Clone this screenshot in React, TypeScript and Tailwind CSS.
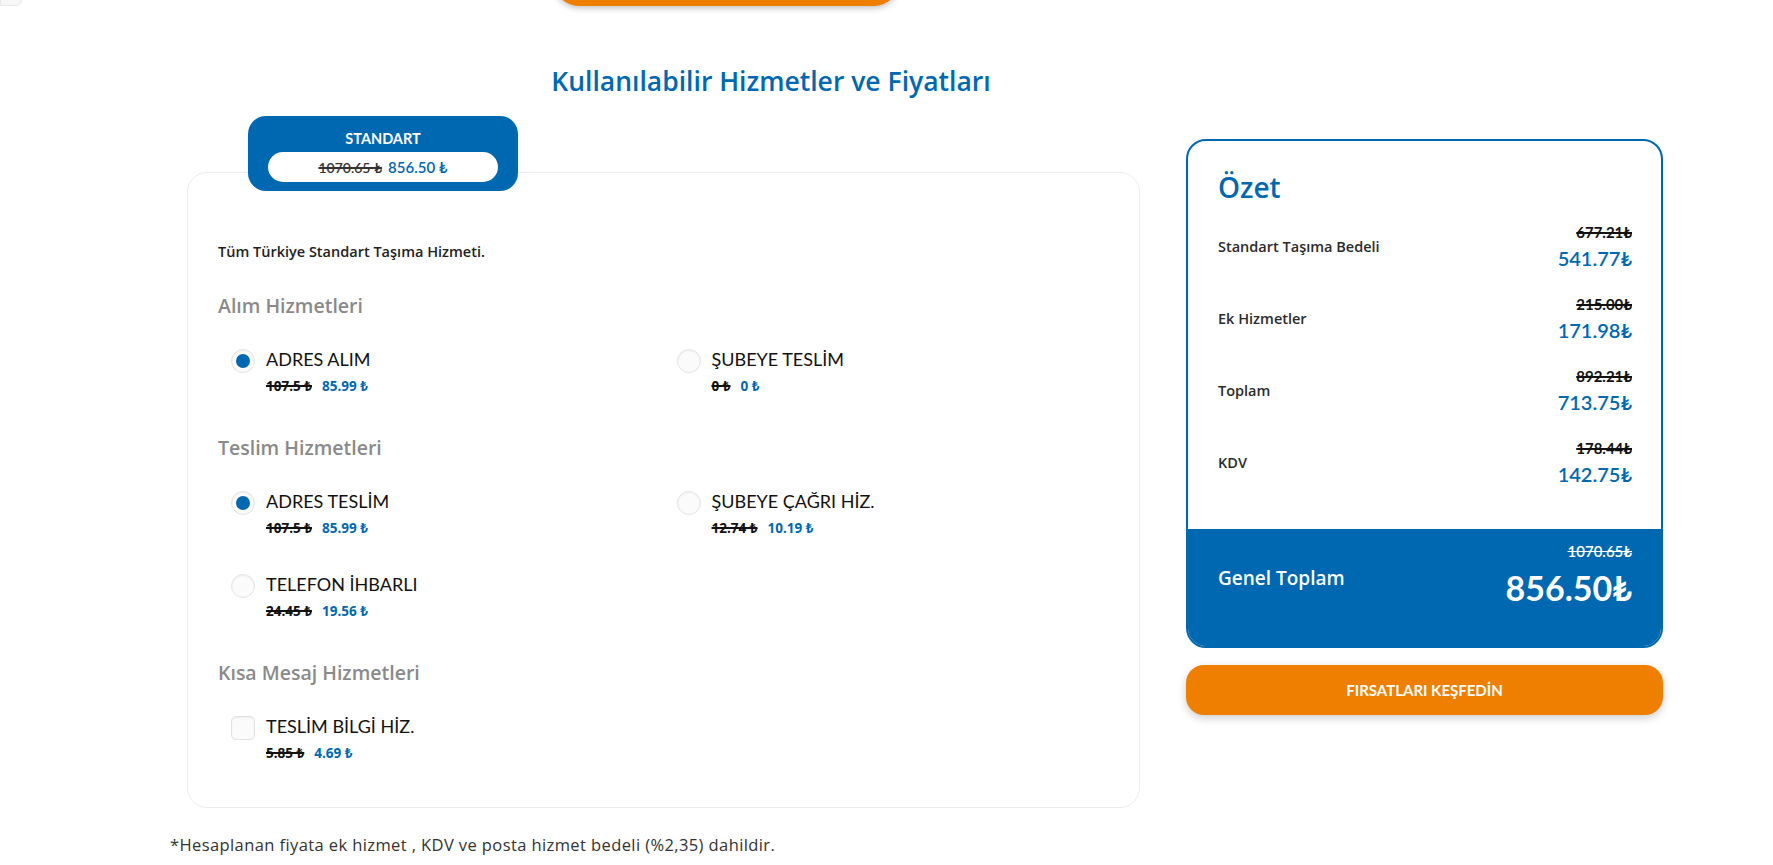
import React from "react";

const UB = "font-['Open_Sans','Noto_Sans',sans-serif]";

type Opt = { label: string; old: string; price: string; selected?: boolean; kind?: "radio" | "check" };

function Control({ selected, kind }: { selected?: boolean; kind?: "radio" | "check" }) {
  if (kind === "check") {
    return <div className="mt-[2px] h-[24px] w-[24px] shrink-0 rounded-[5px] border border-[#e2e2e2] bg-[#fbfbfb] shadow-[inset_0_1px_2px_rgba(0,0,0,0.06)]" />;
  }
  return (
    <div className="mt-[2px] flex h-[24px] w-[24px] shrink-0 items-center justify-center rounded-full border border-[#e4e4e4] bg-[#fbfbfb] shadow-[inset_0_1px_2px_rgba(0,0,0,0.06)]">
      {selected && <div className="h-[14px] w-[14px] rounded-full bg-[#0068b1]" />}
    </div>
  );
}

function Option({ o }: { o: Opt }) {
  return (
    <div className="flex items-start gap-[11px] pl-[13px]">
      <Control selected={o.selected} kind={o.kind} />
      <div className="flex flex-col">
        <div className="text-[18px] leading-[24px] text-[#111]">{o.label}</div>
        <div className={`mt-[5px] flex items-center gap-[10px] text-[13.5px] font-bold leading-[20px] ${UB}`}>
          <span className="text-[#111] line-through decoration-2">{o.old}</span>
          <span className="text-[#0068b1]">{o.price}</span>
        </div>
      </div>
    </div>
  );
}

function Heading({ children, first }: { children: React.ReactNode; first?: boolean }) {
  return (
    <div className={`${first ? "mt-[30px]" : "mt-[38px]"} text-[19.5px] font-semibold leading-[28px] text-[#8a8a8a] ${UB}`}>
      {children}
    </div>
  );
}

function SumRow({ label, old, price, first }: { label: string; old: string; price: string; first?: boolean }) {
  return (
    <div className={`flex items-center justify-between ${first ? "mt-[19px]" : "mt-[24px]"}`}>
      <div className={`text-[14.5px] font-semibold leading-[20px] text-[#2b2b2b] ${UB}`}>{label}</div>
      <div className="flex flex-col items-end">
        <div className="text-[15px] font-bold leading-[18px] text-[#111] line-through decoration-2">{old}</div>
        <div className="mt-[4px] text-[20px] font-semibold leading-[26px] text-[#0068b1]">{price}</div>
      </div>
    </div>
  );
}

export default function App() {
  return (
    <div className="min-h-screen overflow-hidden bg-white font-['Lato','Noto_Sans',sans-serif]">
      <div className="flex">
        <div className="-mt-[2px] h-[8px] w-[22px] rounded-br-[6px] border border-[#e8e8e8] bg-[#f7f7f7]" />
        <div className="ml-[532px] -mt-[44px] h-[50px] w-[345px] rounded-[25px] bg-[#ef7f00] shadow-[0_2px_6px_rgba(0,0,0,0.25)]" />
      </div>

      <div className="mt-[59px] flex w-[1542px] justify-center">
        <h1 className={`text-[26.5px] font-semibold leading-[32px] text-[#0068b1] ${UB}`}>
          Kullanılabilir Hizmetler ve Fiyatları
        </h1>
      </div>

      <div className="mt-[19px] flex items-start pl-[170px]">
        <div className="flex w-[970px] flex-col">
          <div className="relative z-10 ml-[78px] flex h-[75px] w-[270px] flex-col items-center rounded-[18px] bg-[#0068b1] pt-[14px]">
            <div className="text-[14.5px] font-bold leading-[18px] text-white">STANDART</div>
            <div className="mt-[4px] flex h-[30px] w-[230px] items-center justify-center gap-[6px] rounded-full bg-white text-[14px] font-semibold">
              <span className="text-[#333] line-through decoration-2">1070.65 ₺</span>
              <span className="text-[15px] text-[#0068b1]">856.50 ₺</span>
            </div>
          </div>

          <div className="-mt-[19px] ml-[17px] w-[953px] rounded-[20px] border border-[#ececec] px-[30px] pt-[69px] pb-[44px]">
            <div className={`text-[14.5px] font-semibold leading-[20px] text-[#222] ${UB}`}>Tüm Türkiye Standart Taşıma Hizmeti.</div>

            <Heading first>Alım Hizmetleri</Heading>
            <div className="mt-[27px] grid grid-cols-2">
              <Option o={{ label: "ADRES ALIM", old: "107.5 ₺", price: "85.99 ₺", selected: true }} />
              <Option o={{ label: "ŞUBEYE TESLİM", old: "0 ₺", price: "0 ₺" }} />
            </div>

            <Heading>Teslim Hizmetleri</Heading>
            <div className="mt-[27px] grid grid-cols-2 gap-y-[34px]">
              <Option o={{ label: "ADRES TESLİM", old: "107.5 ₺", price: "85.99 ₺", selected: true }} />
              <Option o={{ label: "ŞUBEYE ÇAĞRI HİZ.", old: "12.74 ₺", price: "10.19 ₺" }} />
              <Option o={{ label: "TELEFON İHBARLI", old: "24.45 ₺", price: "19.56 ₺" }} />
            </div>

            <Heading>Kısa Mesaj Hizmetleri</Heading>
            <div className="mt-[27px] grid grid-cols-2">
              <Option o={{ label: "TESLİM BİLGİ HİZ.", old: "5.85 ₺", price: "4.69 ₺", kind: "check" }} />
            </div>
          </div>

          <div className={`mt-[25px] text-[16.5px] leading-[24px] tracking-[0.4px] text-[#333] ${UB}`}>
            *Hesaplanan fiyata ek hizmet , KDV ve posta hizmet bedeli (%2,35) dahildir.
          </div>
        </div>

        <div className="ml-[46px] mt-[23px] flex w-[477px] flex-col">
          <div className="overflow-hidden rounded-[20px] border-2 border-[#0068b1]">
            <div className="px-[30px] pt-[29px] pb-[42px] pr-[29px]">
              <div className={`text-[28px] font-semibold leading-[34px] text-[#0068b1] ${UB}`}>Özet</div>
              <SumRow first label="Standart Taşıma Bedeli" old="677.21₺" price="541.77₺" />
              <SumRow label="Ek Hizmetler" old="215.00₺" price="171.98₺" />
              <SumRow label="Toplam" old="892.21₺" price="713.75₺" />
              <SumRow label="KDV" old="178.44₺" price="142.75₺" />
            </div>
            <div className="flex items-center justify-between bg-[#0068b1] pl-[30px] pr-[29px] pt-[13px] pb-[38px]">
              <div className={`mt-[6px] text-[19px] font-semibold leading-[24px] text-white ${UB}`}>Genel Toplam</div>
              <div className="flex flex-col items-end">
                <div className="text-[15px] font-semibold leading-[18px] text-white line-through">1070.65₺</div>
                <div className="mt-[8px] text-[34px] font-bold leading-[40px] text-white">856.50₺</div>
              </div>
            </div>
          </div>
          <button className="mt-[17px] flex h-[50px] w-full items-center justify-center rounded-[18px] bg-[#ef7f00] text-[15px] font-bold text-white shadow-[0_3px_8px_rgba(0,0,0,0.2)]">
            FIRSATLARI KEŞFEDİN
          </button>
        </div>
      </div>
    </div>
  );
}
